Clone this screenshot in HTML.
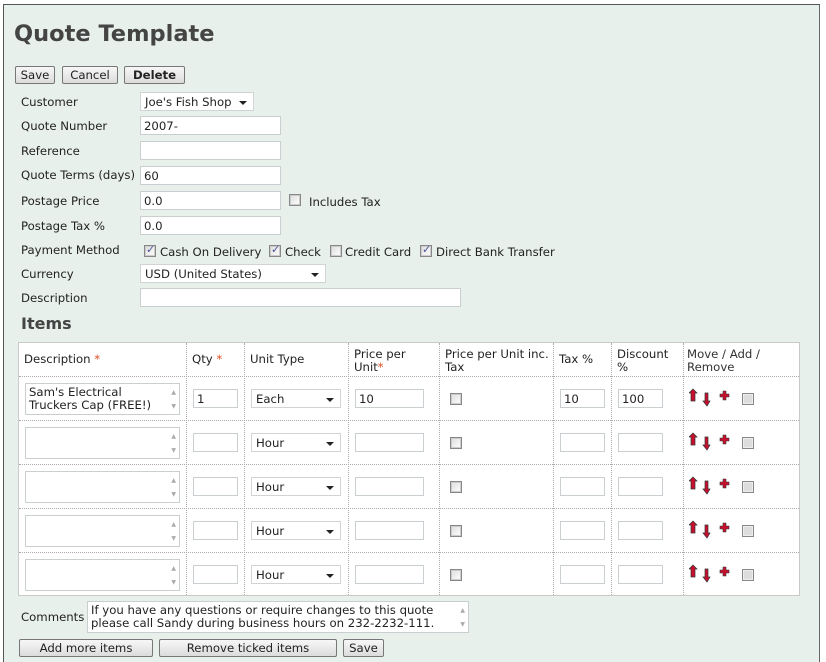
<!DOCTYPE html>
<html style="width:826px;height:662px;overflow:hidden"><head><meta charset="utf-8"><style>
*{box-sizing:border-box;margin:0;padding:0}
body{width:826px;height:662px;background:#fff;font-family:"DejaVu Sans","Liberation Sans",sans-serif;font-size:11.7px;color:#222;position:relative;overflow:hidden}
.frame{position:absolute;left:3px;top:4px;width:817px;height:660px;border:1px solid #555;border-right-color:#666;background:#e8f0eb}
.a{position:absolute}
.l{position:absolute;left:21px;white-space:nowrap}
.in{position:absolute;background:#fff;border:1px solid #c9cfd0;height:19px;padding:2px 3px;white-space:nowrap}
.sel{position:absolute;background:#fff;border:1px solid #d0d4d4;height:19px;padding:2px 4px;white-space:nowrap}
.sel:after{content:"";position:absolute;right:6px;top:8px;border-left:4px solid transparent;border-right:4px solid transparent;border-top:4px solid #222}
.btn{position:absolute;height:18px;border:1px solid #777;border-radius:2px;background:linear-gradient(#f7f7f7,#dcdcdc);text-align:center;line-height:16px}
.cb{position:absolute;width:12px;height:12px;border:1px solid #888;background:linear-gradient(135deg,#ddd,#fff);box-shadow:inset 0 0 0 1px #ccc}
.cb.k:after{content:"✓";position:absolute;left:1px;top:-3px;font-size:11px;color:#4a5a9a;font-weight:bold}
.tbl{position:absolute;left:18px;top:342px;width:782px;height:254px;background:#fff;border:1px solid #c9c9c9}
.vl{position:absolute;top:0;bottom:0;border-left:1px dotted #aaa}
.hl{position:absolute;left:0;right:0;border-top:1px dotted #aaa}
.th{position:absolute;top:5px;line-height:13px}
.r{color:#e04a20}
.ta{position:absolute;background:#fff;border:1px solid #c9cfd0;width:155px;height:32px;padding:2px 3px;line-height:13px}
.ta:after{content:"▲\A▼";white-space:pre;position:absolute;right:3px;top:2px;font-size:6px;line-height:14px;color:#aaa}
.ta.big{width:382px}
</style></head><body>
<div class="frame"></div>
<div class="a" style="left:14px;top:21px;font-size:22.5px;font-weight:bold;color:#444">Quote Template</div>
<div class="btn" style="left:15px;top:66px;width:40px">Save</div>
<div class="btn" style="left:62px;top:66px;width:56px">Cancel</div>
<div class="btn" style="left:124px;top:66px;width:61px;font-weight:bold">Delete</div>

<div class="l" style="top:95px">Customer</div>
<div class="sel" style="left:140px;top:92px;width:114px">Joe's Fish Shop</div>
<div class="l" style="top:119px">Quote Number</div>
<div class="in" style="left:140px;top:116px;width:141px">2007-</div>
<div class="l" style="top:144px">Reference</div>
<div class="in" style="left:140px;top:141px;width:141px"></div>
<div class="l" style="top:168px">Quote Terms (days)</div>
<div class="in" style="left:140px;top:166px;width:141px">60</div>
<div class="l" style="top:194px">Postage Price</div>
<div class="in" style="left:140px;top:191px;width:141px">0.0</div>
<div class="cb" style="left:289px;top:194px"></div>
<div class="a" style="left:309px;top:195px">Includes Tax</div>
<div class="l" style="top:219px">Postage Tax %</div>
<div class="in" style="left:140px;top:216px;width:141px">0.0</div>
<div class="l" style="top:243px">Payment Method</div>
<div class="cb k" style="left:144px;top:245px"></div><div class="a" style="left:160px;top:245px">Cash On Delivery</div>
<div class="cb k" style="left:269px;top:245px"></div><div class="a" style="left:285px;top:245px">Check</div>
<div class="cb" style="left:330px;top:245px"></div><div class="a" style="left:345px;top:245px">Credit Card</div>
<div class="cb k" style="left:420px;top:245px"></div><div class="a" style="left:436px;top:245px">Direct Bank Transfer</div>
<div class="l" style="top:267px">Currency</div>
<div class="sel" style="left:140px;top:264px;width:186px">USD (United States)</div>
<div class="l" style="top:291px">Description</div>
<div class="in" style="left:140px;top:288px;width:321px"></div>
<div class="a" style="left:21px;top:314px;font-size:16px;font-weight:bold;color:#444">Items</div>

<div class="tbl">
<div class="vl" style="left:167px"></div><div class="vl" style="left:225px"></div><div class="vl" style="left:329px"></div><div class="vl" style="left:420px"></div><div class="vl" style="left:534px"></div><div class="vl" style="left:592px"></div><div class="vl" style="left:664px"></div>
<div class="hl" style="top:33px"></div><div class="hl" style="top:77px"></div><div class="hl" style="top:121px"></div><div class="hl" style="top:165px"></div><div class="hl" style="top:209px"></div>
<div class="th" style="left:5px;top:10px">Description <span class="r">*</span></div>
<div class="th" style="left:173px;top:10px">Qty <span class="r">*</span></div>
<div class="th" style="left:231px;top:10px">Unit Type</div>
<div class="th" style="left:335px">Price per<br>Unit<span class="r">*</span></div>
<div class="th" style="left:426px">Price per Unit inc.<br>Tax</div>
<div class="th" style="left:540px;top:10px">Tax %</div>
<div class="th" style="left:598px">Discount<br>%</div>
<div class="th" style="left:668px;color:#333">Move / Add /<br>Remove</div>
</div>

<div class="ta" style="left:25px;top:383px">Sam's Electrical<br>Truckers Cap (FREE!)</div>
<div class="in" style="left:193px;top:389px;width:45px">1</div>
<div class="sel" style="left:251px;top:389px;width:90px">Each</div>
<div class="in" style="left:355px;top:389px;width:69px">10</div>
<div class="cb" style="left:450px;top:393px"></div>
<div class="in" style="left:560px;top:389px;width:45px">10</div>
<div class="in" style="left:618px;top:389px;width:45px">100</div>

<div class="ta" style="left:25px;top:427px"></div><div class="in" style="left:193px;top:433px;width:45px"></div><div class="sel" style="left:251px;top:433px;width:90px">Hour</div><div class="in" style="left:355px;top:433px;width:69px"></div><div class="cb" style="left:450px;top:437px"></div><div class="in" style="left:560px;top:433px;width:45px"></div><div class="in" style="left:618px;top:433px;width:45px"></div>
<div class="ta" style="left:25px;top:471px"></div><div class="in" style="left:193px;top:477px;width:45px"></div><div class="sel" style="left:251px;top:477px;width:90px">Hour</div><div class="in" style="left:355px;top:477px;width:69px"></div><div class="cb" style="left:450px;top:481px"></div><div class="in" style="left:560px;top:477px;width:45px"></div><div class="in" style="left:618px;top:477px;width:45px"></div>
<div class="ta" style="left:25px;top:515px"></div><div class="in" style="left:193px;top:521px;width:45px"></div><div class="sel" style="left:251px;top:521px;width:90px">Hour</div><div class="in" style="left:355px;top:521px;width:69px"></div><div class="cb" style="left:450px;top:525px"></div><div class="in" style="left:560px;top:521px;width:45px"></div><div class="in" style="left:618px;top:521px;width:45px"></div>
<div class="ta" style="left:25px;top:559px"></div><div class="in" style="left:193px;top:565px;width:45px"></div><div class="sel" style="left:251px;top:565px;width:90px">Hour</div><div class="in" style="left:355px;top:565px;width:69px"></div><div class="cb" style="left:450px;top:569px"></div><div class="in" style="left:560px;top:565px;width:45px"></div><div class="in" style="left:618px;top:565px;width:45px"></div>

<svg class="a" style="left:689px;top:387px" width="70" height="200">
<defs><g id="ic">
<path d="M4 2 L8 6 L6 6 L6 14 L2 14 L2 6 L0 6 Z" fill="#c8102e" stroke="#333" stroke-width="0.7"/>
<path d="M17 6 L19 6 L19 14 L21 14 L18 19 L14 14 L16 14 L16 6 Z" fill="#c8102e" stroke="#333" stroke-width="0.7"/>
<path d="M34 4 h3 v3 h3 v3 h-3 v3 h-3 v-3 h-3 v-3 h3 z" fill="#c8102e" stroke="#333" stroke-width="0.6"/>
<rect x="53.5" y="6.5" width="11" height="11" fill="#eee" stroke="#888"/>
<rect x="55" y="8" width="8" height="8" fill="#ddd"/>
</g></defs>
<use href="#ic" y="0"/><use href="#ic" y="44"/><use href="#ic" y="88"/><use href="#ic" y="132"/><use href="#ic" y="176"/>
</svg>

<div class="a" style="left:21px;top:610px">Comments</div>
<div class="ta big" style="left:87px;top:601px">If you have any questions or require changes to this quote<br>please call Sandy during business hours on 232-2232-111.</div>
<div class="btn" style="left:19px;top:639px;width:134px">Add more items</div>
<div class="btn" style="left:159px;top:639px;width:178px">Remove ticked items</div>
<div class="btn" style="left:343px;top:639px;width:41px">Save</div>
</body></html>
